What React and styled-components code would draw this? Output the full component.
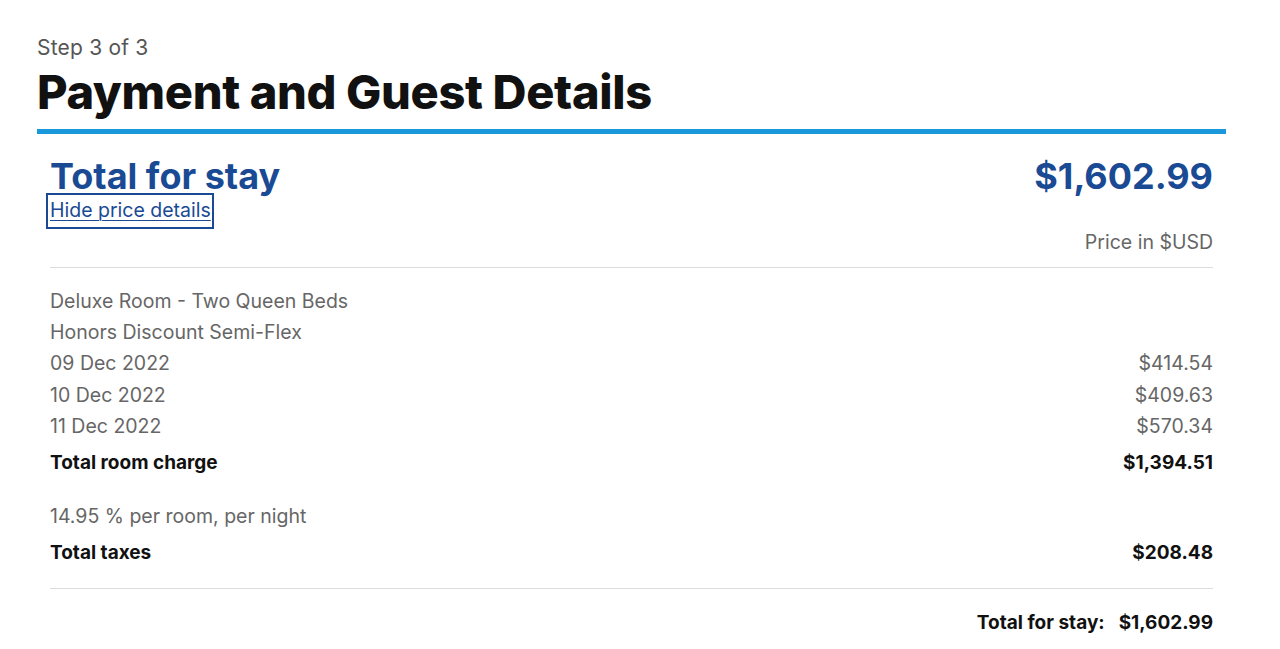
import React from "react";
import styled, { createGlobalStyle } from "styled-components";

const Global = createGlobalStyle`
  html, body { margin: 0; padding: 0; background: #fff; }
  body { font-family: Inter, "Noto Sans", sans-serif; color: #111; }
`;

const Page = styled.div`
  padding: 34px 54px 0 37px;
`;

const Step = styled.div`
  font-size: 21px;
  color: #555;
  line-height: 28px;
  letter-spacing: 0.2px;
`;

const Title = styled.h1`
  margin: 0;
  font-size: 47px;
  font-weight: 800;
  line-height: 60px;
  color: #111;
  letter-spacing: -0.35px;
`;

const Bar = styled.div`
  height: 5px;
  background: #1a98dc;
  margin-top: 7px;
`;

const Panel = styled.div`
  padding: 0 13px;
`;

const SummaryHead = styled.div`
  display: flex;
  justify-content: space-between;
  align-items: flex-start;
  padding-top: 22px;
`;

const SummaryLeft = styled.div`
  display: flex;
  flex-direction: column;
  align-items: flex-start;
`;

const Big = styled.div`
  font-size: 36px;
  font-weight: 700;
  color: #1a4a94;
  line-height: 40px;
`;

const HideLink = styled.a`
  display: inline-block;
  margin: -3px 0 0 -4px;
  padding: 2px 1px 3px 2px;
  font-size: 19.5px;
  line-height: 27px;
  color: #1a4a94;
  text-decoration: underline;
  text-underline-offset: 3px;
  text-decoration-thickness: 1px;
  border: 2px solid #1a4a94;
  cursor: pointer;
`;

const PriceNote = styled.div`
  text-align: right;
  font-size: 19.5px;
  color: #666;
  line-height: 26px;
`;

const Divider = styled.hr`
  border: 0;
  border-top: 1.5px solid #dcdcdc;
  margin: ${(p) => p.$m || "12px 0 0"};
`;

const List = styled.div`
  display: flex;
  flex-direction: column;
  padding-top: 17px;
`;

const Row = styled.div`
  display: flex;
  justify-content: space-between;
  align-items: center;
  height: ${(p) => (p.$bold ? "42px" : "31.4px")};
  font-size: ${(p) => (p.$bold ? "19px" : "19.5px")};
  font-weight: ${(p) => (p.$bold ? 700 : 400)};
  color: ${(p) => (p.$bold ? "#111" : "#666")};
  margin-top: ${(p) => p.$gap || "0"};
`;

const Footer = styled.div`
  display: flex;
  justify-content: flex-end;
  gap: 14px;
  padding-top: 22px;
  font-size: 19px;
  line-height: 24px;
  font-weight: 700;
  color: #111;
`;

export default function App() {
  return (
    <>
      <Global />
      <Page>
        <Step>Step 3 of 3</Step>
        <Title>Payment and Guest Details</Title>
        <Bar />
        <Panel>
          <SummaryHead>
            <SummaryLeft>
              <Big>Total for stay</Big>
              <HideLink>Hide price details</HideLink>
            </SummaryLeft>
            <Big>$1,602.99</Big>
          </SummaryHead>
          <PriceNote>Price in $USD</PriceNote>
          <Divider />
          <List>
            <Row><span>Deluxe Room - Two Queen Beds</span></Row>
            <Row><span>Honors Discount Semi-Flex</span></Row>
            <Row><span>09 Dec 2022</span><span>$414.54</span></Row>
            <Row><span>10 Dec 2022</span><span>$409.63</span></Row>
            <Row><span>11 Dec 2022</span><span>$570.34</span></Row>
            <Row $bold><span>Total room charge</span><span>$1,394.51</span></Row>
            <Row $gap="16px"><span>14.95 % per room, per night</span></Row>
            <Row $bold><span>Total taxes</span><span>$208.48</span></Row>
          </List>
          <Divider $m="15px 0 0" />
          <Footer>
            <span>Total for stay:</span>
            <span>$1,602.99</span>
          </Footer>
        </Panel>
      </Page>
    </>
  );
}
